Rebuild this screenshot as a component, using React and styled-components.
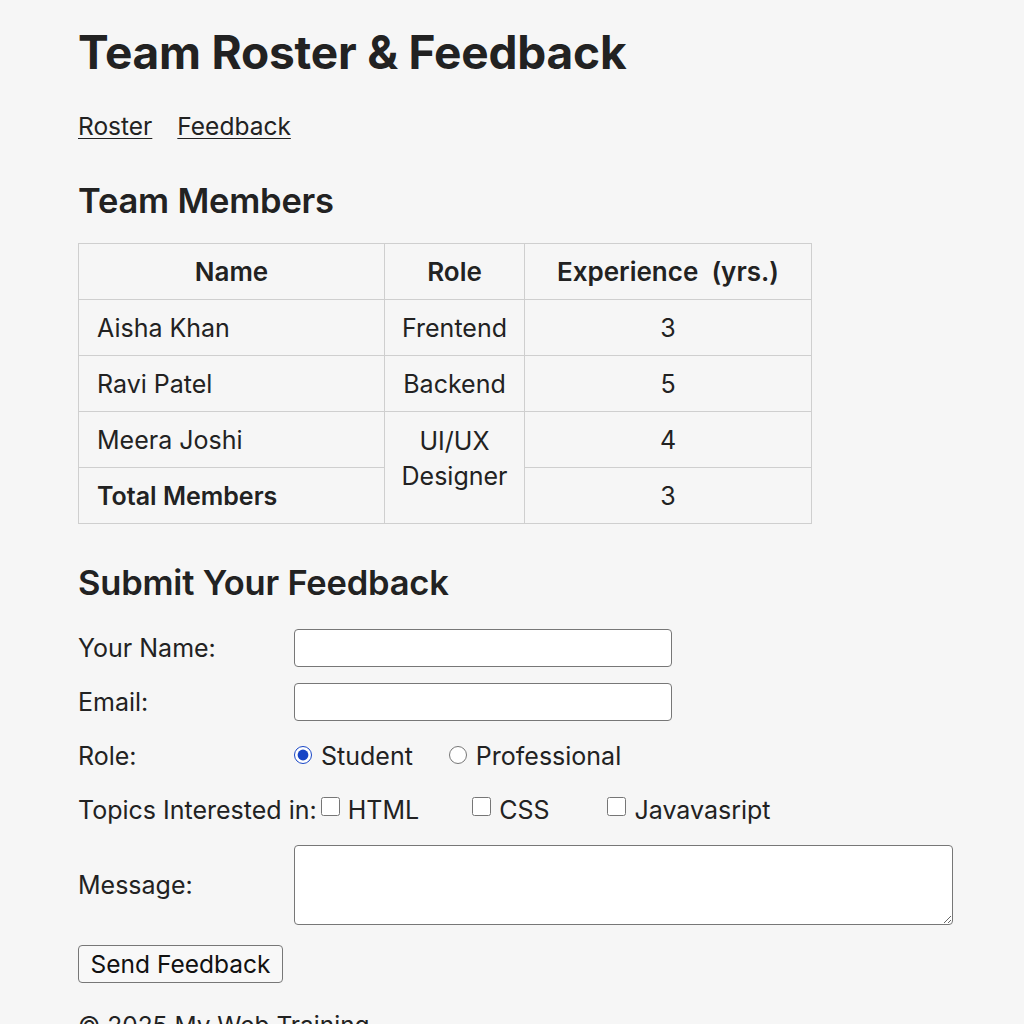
import React from 'react';
import styled, { createGlobalStyle } from 'styled-components';

const GlobalStyle = createGlobalStyle`
  body {
    margin: 0;
    background: #f6f6f6;
    color: #222;
    font-family: Inter, "Noto Sans", "Liberation Sans", sans-serif;
  }
`;

const members = [
  { name: 'Aisha Khan', role: 'Frentend', exp: 3 },
  { name: 'Ravi Patel', role: 'Backend', exp: 5 },
];

const App = () => {
  return (
    <Page>
      <GlobalStyle />
      <Title>Team Roster &amp; Feedback</Title>
      <Nav>
        <NavLink href="#roster">Roster</NavLink>
        <NavLink href="#feedback">Feedback</NavLink>
      </Nav>

      <SectionTitle id="roster">Team Members</SectionTitle>
      <Table>
        <colgroup>
          <col style={{ width: 306 }} />
          <col style={{ width: 140 }} />
          <col style={{ width: 287 }} />
        </colgroup>
        <thead>
          <tr>
            <Th>Name</Th>
            <Th>Role</Th>
            <Th>Experience&nbsp; (yrs.)</Th>
          </tr>
        </thead>
        <tbody>
          {members.map((m) => (
            <tr key={m.name}>
              <Td>{m.name}</Td>
              <Td $center>{m.role}</Td>
              <Td $center>{m.exp}</Td>
            </tr>
          ))}
          <tr>
            <Td>Meera Joshi</Td>
            <RoleSpan rowSpan={2}>UI/UX<br />Designer</RoleSpan>
            <Td $center>4</Td>
          </tr>
          <tr>
            <Td $bold>Total Members</Td>
            <Td $center>3</Td>
          </tr>
        </tbody>
      </Table>

      <FormTitle id="feedback">Submit Your Feedback</FormTitle>
      <Form onSubmit={(e) => e.preventDefault()}>
        <Row>
          <Label htmlFor="name">Your Name:</Label>
          <TextInput id="name" type="text" />
        </Row>
        <Row>
          <Label htmlFor="email">Email:</Label>
          <TextInput id="email" type="email" />
        </Row>
        <Row>
          <Label>Role:</Label>
          <Choice $gap={36}>
            <Radio type="radio" name="role" defaultChecked />
            Student
          </Choice>
          <Choice>
            <Radio type="radio" name="role" />
            Professional
          </Choice>
        </Row>
        <Row>
          <Label>Topics Interested in:</Label>
          <Choice $gap={49}>
            <Check type="checkbox" />
            HTML
          </Choice>
          <Choice $gap={54}>
            <Check type="checkbox" />
            CSS
          </Choice>
          <Choice>
            <Check type="checkbox" />
            Javavasript
          </Choice>
        </Row>
        <Row $tall>
          <Label htmlFor="msg">Message:</Label>
          <Message id="msg" />
        </Row>
        <SendButton type="submit">Send Feedback</SendButton>
      </Form>

      <Footer>© 2025 My Web Training</Footer>
    </Page>
  );
};

export default App;

const Page = styled.div`
  padding: 24px 0 40px 78px;
`;

const Title = styled.h1`
  margin: 0;
  font-size: 46px;
  line-height: 56px;
  font-weight: 700;
  letter-spacing: -0.2px;
`;

const Nav = styled.nav`
  display: flex;
  gap: 25px;
  margin-top: 31px;
  height: 30px;
  align-items: center;
`;

const NavLink = styled.a`
  color: #222;
  font-size: 24.5px;
  text-decoration: underline;
  text-underline-offset: 3px;
  text-decoration-thickness: 1px;
`;

const SectionTitle = styled.h2`
  margin: 40px 0 0;
  font-size: 34.5px;
  line-height: 40px;
  font-weight: 600;
  letter-spacing: -0.2px;
`;

const Table = styled.table`
  margin-top: 22px;
  border-collapse: collapse;
  width: 733px;
  table-layout: fixed;
  font-size: 25px;
`;

const Th = styled.th`
  height: 55px;
  border: 1px solid #cfcfcf;
  font-size: 26px;
  font-weight: 600;
  text-align: center;
  padding: 0;
`;

const Td = styled.td`
  height: 55px;
  border: 1px solid #cfcfcf;
  padding: 0 ${(p) => (p.$center ? '0' : '18px')};
  text-align: ${(p) => (p.$center ? 'center' : 'left')};
  font-weight: ${(p) => (p.$bold ? 600 : 400)};
`;

const RoleSpan = styled.td`
  border: 1px solid #cfcfcf;
  text-align: center;
  vertical-align: top;
  padding-top: 12px;
  line-height: 35px;
`;

const FormTitle = styled(SectionTitle)`
  margin-top: 39px;
`;

const Form = styled.form`
  margin-top: 26px;
  display: flex;
  flex-direction: column;
  gap: 16px;
  font-size: 25px;
`;

const Row = styled.div`
  display: flex;
  align-items: center;
  height: ${(p) => (p.$tall ? '80px' : '38px')};
`;

const Label = styled.label`
  flex: 0 0 auto;
  min-width: 216px;
  white-space: nowrap;
`;

const TextInput = styled.input`
  box-sizing: border-box;
  width: 378px;
  height: 38px;
  border: 1px solid #777;
  border-radius: 4px;
  background: #fff;
  font-size: 20px;
  padding: 0 8px;
`;

const Message = styled.textarea`
  box-sizing: border-box;
  width: 659px;
  height: 80px;
  border: 1px solid #777;
  border-radius: 4px;
  background: #fff;
  font-size: 20px;
`;

const Choice = styled.label`
  display: inline-flex;
  align-items: center;
  margin-right: ${(p) => p.$gap || 0}px;
  white-space: nowrap;
`;

const Radio = styled.input`
  width: 18px;
  height: 18px;
  margin: 0 9px 3px 0;
  accent-color: #1745c5;
`;

const Check = styled.input`
  width: 19px;
  height: 19px;
  margin: 0 8px 8px 4px;
`;

const SendButton = styled.button`
  align-self: flex-start;
  margin-top: 4px;
  width: 205px;
  height: 38px;
  border: 1px solid #777;
  border-radius: 4px;
  background: #f8f8f8;
  color: #111;
  font-family: inherit;
  font-size: 24.5px;
  padding: 0;
`;

const Footer = styled.footer`
  margin-top: 27px;
  font-size: 24.5px;
  line-height: 30px;
`;
